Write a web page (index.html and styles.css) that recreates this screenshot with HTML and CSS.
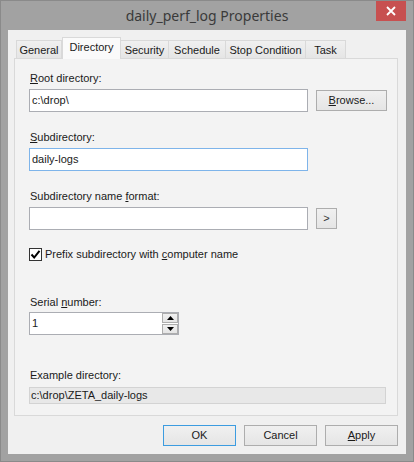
FILE: index.html
```html
<!DOCTYPE html>
<html lang="en">
<head>
<meta charset="UTF-8">
<meta name="viewport" content="width=device-width, initial-scale=1.0">
<title>daily_perf_log Properties</title>
<link rel="stylesheet" href="styles.css">
</head>
<body>
<div class="window">
    <div class="titlebar">
        <span></span>
        <div class="title">daily_perf_log Properties</div>
        <div class="close">
            <svg width="10" height="10" viewBox="0 0 10 10"><path d="M1 1 L9 9 M9 1 L1 9" stroke="#fff" stroke-width="1.8"/></svg>
        </div>
    </div>
    <div class="client">
        <div class="tabs">
            <div class="tab t-general">General</div>
            <div class="tab t-directory active">Directory</div>
            <div class="tab t-security">Security</div>
            <div class="tab t-schedule">Schedule</div>
            <div class="tab t-stop">Stop Condition</div>
            <div class="tab t-task">Task</div>
        </div>
        <div class="panel">
            <div class="label first"><u>R</u>oot directory:</div>
            <div class="row">
                <div class="textbox wide">c:\drop\</div>
                <div class="button browse"><u>B</u>rowse...</div>
            </div>

            <div class="label"><u>S</u>ubdirectory:</div>
            <div class="row">
                <div class="textbox wide focused">daily-logs</div>
            </div>

            <div class="label">Subdirectory name <u>f</u>ormat:</div>
            <div class="row">
                <div class="textbox wide"></div>
                <div class="button arrow">&gt;</div>
            </div>

            <div class="check-row">
                <div class="checkbox">
                    <svg width="11" height="11" viewBox="0 0 11 11"><path d="M1.5 5.5 L4.2 8.5 L9.5 1.8" fill="none" stroke="#000" stroke-width="2"/></svg>
                </div>
                <span>Prefix subdirectory with <u>c</u>omputer name</span>
            </div>

            <div class="label serial">Serial <u>n</u>umber:</div>
            <div class="row tight">
                <div class="textbox spin">
                    <span class="spin-value">1</span>
                    <div class="spin-buttons">
                        <div class="spin-btn"><svg width="7" height="4" viewBox="0 0 7 4"><path d="M0 4 L3.5 0 L7 4 Z" fill="#000"/></svg></div>
                        <div class="spin-btn"><svg width="7" height="4" viewBox="0 0 7 4"><path d="M0 0 L3.5 4 L7 0 Z" fill="#000"/></svg></div>
                    </div>
                </div>
            </div>

            <div class="label example">Example directory:</div>
            <div class="readonly">c:\drop\ZETA_daily-logs</div>
        </div>
        <div class="footer">
            <div class="button action default">OK</div>
            <div class="button action">Cancel</div>
            <div class="button action"><u>A</u>pply</div>
        </div>
    </div>
</div>
</body>
</html>
```

FILE: styles.css
```css
body {
    margin: 0;
    padding: 0;
    font-family: 'Liberation Sans', Arial, sans-serif;
    font-size: 11px;
    color: #1a1a1a;
    background-color: #a2a2a2;
}
.window {
    width: 414px;
    height: 462px;
    box-sizing: border-box;
    border: 1px solid #8a8a8a;
    background-color: #a2a2a2;
    display: flex;
    flex-direction: column;
}
.titlebar {
    height: 29px;
    display: grid;
    grid-template-columns: 1fr auto 1fr;
    align-items: start;
}
.title {
    font-family: 'Noto Sans', sans-serif;
    font-size: 14px;
    color: #3a3a3a;
    line-height: 19px;
    margin-top: 5px;
}
.close {
    justify-self: end;
    margin-right: 7px;
    width: 30px;
    height: 20px;
    background-color: #c75050;
    display: flex;
    justify-content: center;
    align-items: center;
}
.client {
    margin: 0 7px 7px 7px;
    height: 424px;
    box-sizing: border-box;
    background-color: #f0f0f0;
    padding: 7px 8px 0 6px;
}
.tabs {
    display: flex;
    align-items: flex-end;
    height: 21px;
    padding-left: 2px;
    position: relative;
    z-index: 1;
}
.tab {
    height: 18px;
    box-sizing: border-box;
    border: 1px solid #d9d9d9;
    border-bottom: none;
    border-left: none;
    background: linear-gradient(#f0f0f0, #e5e5e5);
    text-align: center;
    line-height: 18px;
    font-size: 11px;
}
.t-general { width: 46px; border-left: 1px solid #d9d9d9; }
.t-directory { width: 59px; }
.t-security { width: 48px; }
.t-schedule { width: 57px; }
.t-stop { width: 80px; }
.t-task { width: 40px; }
.tab.active {
    height: 22px;
    margin-bottom: -1px;
    background: #fafafa;
    border-left: 1px solid #d9d9d9;
    line-height: 19px;
}
.panel {
    height: 358px;
    box-sizing: border-box;
    border: 1px solid #d9d9d9;
    background-color: #f3f3f3;
    padding: 12px 0 0 14px;
}
.label {
    line-height: 14px;
    padding-left: 1px;
    margin-top: 18px;
}
.label.first {
    margin-top: 0;
}
.row {
    display: flex;
    align-items: center;
    margin-top: 4px;
}
.row.tight {
    margin-top: 3px;
}
.textbox {
    height: 23px;
    box-sizing: border-box;
    border: 1px solid #abadb3;
    background-color: #fff;
    padding-left: 2px;
    line-height: 21px;
}
.textbox.wide {
    width: 279px;
}
.textbox.focused {
    border-color: #7eb4ea;
}
.button {
    height: 21px;
    box-sizing: border-box;
    border: 1px solid #adadad;
    background: linear-gradient(#f0f0f0, #e5e5e5);
    text-align: center;
    line-height: 19px;
}
.browse {
    width: 71px;
    margin-left: 8px;
}
.arrow {
    width: 21px;
    margin-left: 8px;
    color: #333;
}
.check-row {
    display: flex;
    align-items: center;
    height: 14px;
    margin-top: 17px;
}
.checkbox {
    width: 13px;
    height: 13px;
    box-sizing: border-box;
    border: 1px solid #333;
    background-color: #fff;
    margin-right: 3px;
    display: flex;
    justify-content: center;
    align-items: center;
}
.label.serial {
    margin-top: 34px;
}
.textbox.spin {
    width: 150px;
    display: flex;
    justify-content: space-between;
    padding-right: 0;
}
.spin-buttons {
    display: flex;
    flex-direction: column;
    width: 16px;
    gap: 1px;
}
.spin-btn {
    height: 10px;
    box-sizing: border-box;
    border: 1px solid #adadad;
    background: linear-gradient(#f0f0f0, #e5e5e5);
    display: flex;
    justify-content: center;
    align-items: center;
}
.label.example {
    margin-top: 33px;
}
.readonly {
    width: 357px;
    height: 17px;
    box-sizing: border-box;
    margin-top: 5px;
    border: 1px solid #d3d3d3;
    background-color: #e8e8e8;
    padding-left: 1px;
    line-height: 15px;
}
.footer {
    display: flex;
    justify-content: flex-end;
    gap: 8px;
    margin-top: 9px;
}
.action {
    width: 73px;
}
.action.default {
    border-color: #3c9ce0;
}
```
